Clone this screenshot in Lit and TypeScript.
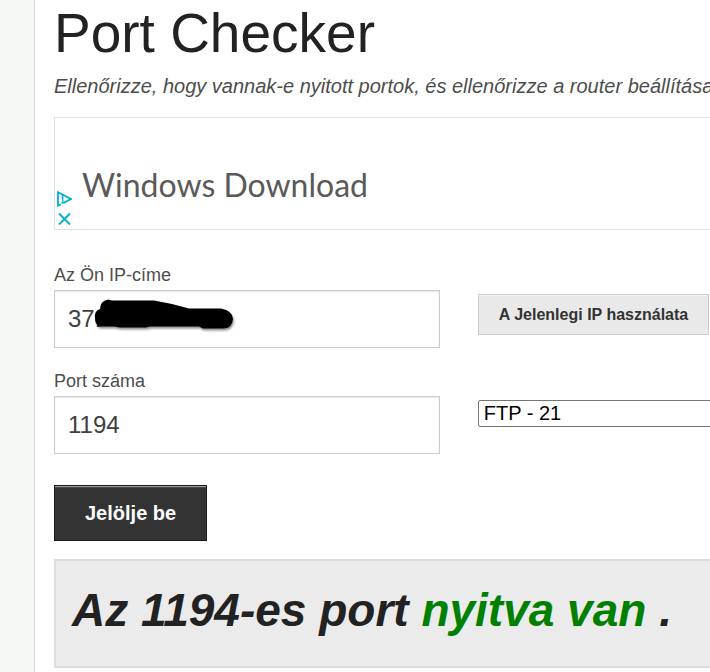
import { LitElement, html, css } from "lit";
import { customElement, state } from "lit/decorators.js";

@customElement("app-root")
export class AppRoot extends LitElement {
  @state() private port = "1194";

  private services = [
    { name: "FTP", port: 21 },
    { name: "SSH", port: 22 },
    { name: "HTTP", port: 80 },
    { name: "HTTPS", port: 443 },
  ];

  static styles = css`
    :host {
      display: flex;
      min-height: 100vh;
      overflow: hidden;
      background: #fff;
      color: #4d4d4d;
      font-family: "Liberation Sans", Arial, sans-serif;
    }
    * {
      box-sizing: border-box;
    }
    .rail {
      flex: none;
      width: 35px;
      background: #f3faf3;
      border-right: 1px solid #dcdcdc;
    }
    /* The content column runs on past the right edge of the window. */
    .content {
      flex: 1;
      min-width: 0;
      margin-right: -25px;
      padding-left: 19px;
    }
    h1 {
      margin: 0;
      font-size: 55px;
      line-height: 66px;
      font-weight: 400;
      color: #222;
    }
    .intro {
      margin: 8px 0 18px;
      font-size: 20px;
      line-height: 25px;
      font-style: italic;
      white-space: nowrap;
    }
    .ad {
      display: flex;
      align-items: flex-end;
      gap: 10px;
      height: 113px;
      padding: 0 2px 2px;
      border: 1px solid #e3e3e3;
    }
    .ad-marks {
      display: flex;
      flex-direction: column;
      gap: 4px;
    }
    .ad-marks button {
      display: block;
      height: 16px;
      padding: 0;
      border: 0;
      background: none;
    }
    .ad-marks svg {
      display: block;
    }
    .ad-title {
      padding-bottom: 23px;
      font-family: Lato, sans-serif;
      font-size: 32px;
      line-height: 38px;
      color: #5a5a5a;
      text-decoration: none;
      white-space: nowrap;
    }
    .fields {
      display: grid;
      grid-template-columns: 3fr 2fr;
      gap: 22px 38px;
      margin-top: 34px;
    }
    .field label {
      display: block;
      margin-bottom: 4px;
      font-size: 18px;
      line-height: 22px;
    }
    .box {
      position: relative;
    }
    .box input {
      display: block;
      width: 100%;
      height: 58px;
      padding: 0 13px;
      border: 1px solid #ccc;
      border-radius: 0;
      background: #fff;
      box-shadow: inset 0 1px 2px rgba(0, 0, 0, 0.1);
      font: 24px "Liberation Sans", Arial, sans-serif;
      color: #404040;
    }
    .scribble {
      position: absolute;
      left: 36px;
      top: 4px;
      pointer-events: none;
      filter: drop-shadow(1px 2px 1px rgba(0, 0, 0, 0.45));
    }
    .aside {
      padding-top: 30px;
    }
    .use-ip {
      display: block;
      height: 41px;
      padding: 0 20px;
      border: 1px solid #ccc;
      background: #e9e9e9;
      box-shadow: inset 0 1px 0 rgba(255, 255, 255, 0.5);
      font: bold 16px "Liberation Sans", Arial, sans-serif;
      color: #333;
      white-space: nowrap;
    }
    .service {
      display: block;
      width: 100%;
      height: 27px;
      padding: 0 1px 2px;
      border: 1px solid #767676;
      border-radius: 2px;
      background: #fff;
      font: 20px "Liberation Sans", Arial, sans-serif;
      color: #000;
    }
    .check {
      display: block;
      height: 56px;
      margin-top: 31px;
      padding: 0 30px;
      border: 1px solid #1a1a1a;
      background: #333;
      box-shadow: inset 0 1px 0 #999, inset 0 2px 0 #484848;
      font: bold 20px "Liberation Sans", Arial, sans-serif;
      color: #fff;
    }
    .result {
      margin: 18px 0 0;
      padding: 19px 16px 26px;
      border: 2px solid #ddd;
      background: #ebebeb;
      font-size: 46px;
      line-height: 60px;
      font-weight: 700;
      font-style: italic;
      color: #222;
      white-space: nowrap;
    }
    .open {
      color: #008000;
    }
  `;

  render() {
    return html`
      <div class="rail"></div>
      <main class="content">
        <h1>Port Checker</h1>
        <p class="intro">
          Ellenőrizze, hogy vannak-e nyitott portok, és ellenőrizze a router beállításait
        </p>
        <div class="ad">
          <div class="ad-marks">
            <button type="button" aria-label="AdChoices">
              <svg width="15" height="16" viewBox="0 0 15 16" fill="none" stroke="#00aecd">
                <path d="M4 13.2L1 14.7V1.3L14 8L6.5 11.9" stroke-width="1.8" />
                <path d="M4.4 6.6H5.8V11.6M4.2 11.8H7.4" stroke-width="1.3" />
                <circle cx="5.6" cy="4.9" r="1" fill="#00aecd" stroke="none" />
              </svg>
            </button>
            <button type="button" aria-label="Close">
              <svg width="15" height="16" viewBox="0 0 15 16" fill="none" stroke="#00aecd">
                <path d="M2 2.5L13 13.5M13 2.5L2 13.5" stroke-width="1.8" />
              </svg>
            </button>
          </div>
          <a class="ad-title" href="#">Windows Download</a>
        </div>
        <form @submit=${(e: Event) => e.preventDefault()}>
          <div class="fields">
            <div class="field">
              <label for="ip">Az Ön IP-címe</label>
              <div class="box">
                <input id="ip" type="text" value="37." />
                <svg class="scribble" width="150" height="40" viewBox="0 0 150 40">
                  <path
                    d="M5 24Q4 17 10 15Q10 7 18 5.5L22 6.5H64L82 10L99 14.5H131Q143 17 143 25Q142 34 134 34.5H113L109 32.5H60L56 33.5H30L24 32.5H9Q5 30 5 24Z"
                  />
                </svg>
              </div>
            </div>
            <div class="aside">
              <button class="use-ip" type="button">A Jelenlegi IP használata</button>
            </div>
            <div class="field">
              <label for="port">Port száma</label>
              <div class="box">
                <input
                  id="port"
                  type="text"
                  .value=${this.port}
                  @input=${(e: Event) => (this.port = (e.target as HTMLInputElement).value)}
                />
              </div>
            </div>
            <div class="aside">
              <select
                class="service"
                aria-label="Port"
                @change=${(e: Event) => (this.port = (e.target as HTMLSelectElement).value)}
              >
                ${this.services.map(
                  (s) => html`<option value=${s.port}>${s.name} - ${s.port}</option>`
                )}
              </select>
            </div>
          </div>
          <button class="check" type="submit">Jelölje be</button>
        </form>
        <p class="result">Az 1194-es port <span class="open">nyitva van</span> .</p>
      </main>
    `;
  }
}
